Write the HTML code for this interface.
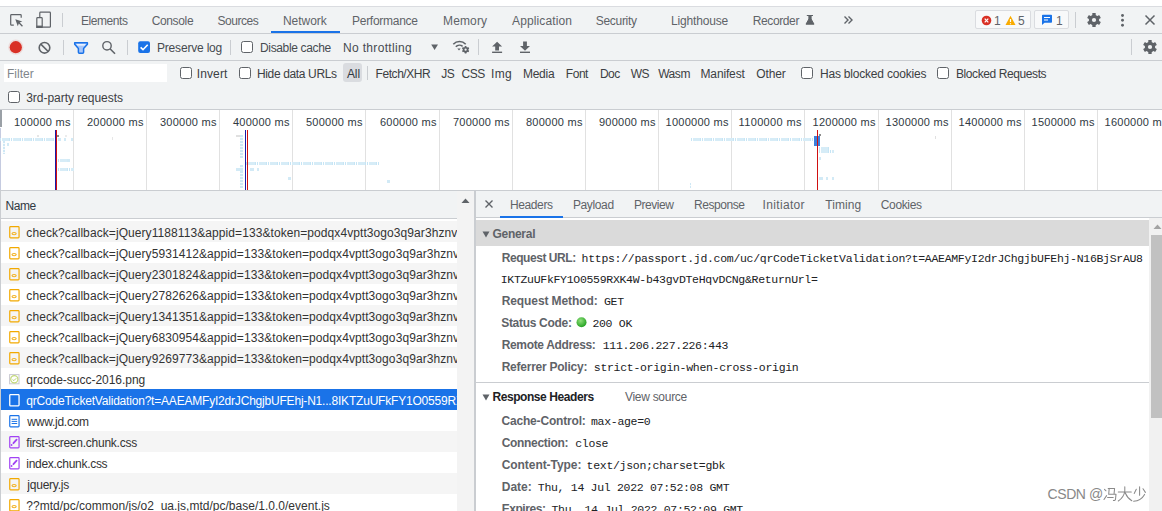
<!DOCTYPE html>
<html><head><meta charset="utf-8"><style>
html,body{margin:0;padding:0;width:1162px;height:511px;overflow:hidden;background:#fff;position:relative;font-family:'Liberation Sans', sans-serif;}
svg{display:block;}
</style></head><body>
<div style="position:absolute;left:0px;top:0px;width:1162px;height:6px;background:#fff;"></div><div style="position:absolute;left:0px;top:6px;width:1162px;height:1px;background:#dadce0;"></div><div style="position:absolute;left:0px;top:7px;width:1162px;height:26px;background:#f1f3f4;"></div><div style="position:absolute;left:0px;top:33px;width:1162px;height:1px;background:#cacdd1;"></div><div style="position:absolute;left:0px;top:34px;width:1162px;height:26px;background:#f1f3f4;"></div><div style="position:absolute;left:0px;top:60px;width:1162px;height:1px;background:#cacdd1;"></div><div style="position:absolute;left:0px;top:61px;width:1162px;height:48px;background:#f1f3f4;"></div><div style="position:absolute;left:0px;top:109px;width:1162px;height:1px;background:#cacdd1;"></div><div style="position:absolute;left:0px;top:110px;width:1162px;height:80px;background:#fff;"></div><div style="position:absolute;left:0px;top:190px;width:1162px;height:1px;background:#cacdd1;"></div><div style="position:absolute;left:271px;top:31px;width:69px;height:2px;background:#1a73e8;"></div><div style="position:absolute;left:62px;top:13px;width:1px;height:14px;background:#cacdd1;"></div><div style="position:absolute;left:1075px;top:12px;width:1px;height:16px;background:#cacdd1;"></div><div style="position:absolute;left:63px;top:40px;width:1px;height:15px;background:#cacdd1;"></div><div style="position:absolute;left:127px;top:40px;width:1px;height:15px;background:#cacdd1;"></div><div style="position:absolute;left:230px;top:40px;width:1px;height:15px;background:#cacdd1;"></div><div style="position:absolute;left:478px;top:39px;width:1px;height:16px;background:#cacdd1;"></div><div style="position:absolute;left:1131px;top:39px;width:1px;height:16px;background:#cacdd1;"></div><div style="position:absolute;left:4px;top:64px;width:163px;height:18px;background:#fff;"></div><div style="position:absolute;left:343px;top:63px;width:19px;height:19px;background:#dadce0;border-radius:3px;"></div><div style="position:absolute;left:367px;top:66px;width:1px;height:14px;background:#cacdd1;"></div><div style="position:absolute;left:73px;top:110px;width:1px;height:80px;background:#e1e1e1;"></div><div style="position:absolute;left:146px;top:110px;width:1px;height:80px;background:#e1e1e1;"></div><div style="position:absolute;left:219px;top:110px;width:1px;height:80px;background:#e1e1e1;"></div><div style="position:absolute;left:292px;top:110px;width:1px;height:80px;background:#e1e1e1;"></div><div style="position:absolute;left:365px;top:110px;width:1px;height:80px;background:#e1e1e1;"></div><div style="position:absolute;left:439px;top:110px;width:1px;height:80px;background:#e1e1e1;"></div><div style="position:absolute;left:512px;top:110px;width:1px;height:80px;background:#e1e1e1;"></div><div style="position:absolute;left:585px;top:110px;width:1px;height:80px;background:#e1e1e1;"></div><div style="position:absolute;left:658px;top:110px;width:1px;height:80px;background:#e1e1e1;"></div><div style="position:absolute;left:731px;top:110px;width:1px;height:80px;background:#e1e1e1;"></div><div style="position:absolute;left:804px;top:110px;width:1px;height:80px;background:#e1e1e1;"></div><div style="position:absolute;left:878px;top:110px;width:1px;height:80px;background:#e1e1e1;"></div><div style="position:absolute;left:951px;top:110px;width:1px;height:80px;background:#e1e1e1;"></div><div style="position:absolute;left:1024px;top:110px;width:1px;height:80px;background:#e1e1e1;"></div><div style="position:absolute;left:1097px;top:110px;width:1px;height:80px;background:#e1e1e1;"></div><div style="position:absolute;left:0px;top:110px;width:2px;height:17px;background:#9aa0a6;"></div><div style="position:absolute;left:0px;top:128px;width:1px;height:62px;background:#c5cbe0;"></div><div style="position:absolute;left:0px;top:138px;width:54px;height:3px;background:repeating-linear-gradient(90deg,#c6e5f5 0 1px,#fff 1px 2px,#d6ecf7 2px 9px,#c6e5f5 9px 10px,#fff 10px 11px);"></div><div style="position:absolute;left:58px;top:138px;width:3px;height:3px;background:#d2eaf6;"></div><div style="position:absolute;left:64px;top:138px;width:2px;height:3px;background:#d2eaf6;"></div><div style="position:absolute;left:71px;top:138px;width:2px;height:3px;background:#d2eaf6;"></div><div style="position:absolute;left:3px;top:141px;width:2px;height:13px;background:repeating-linear-gradient(180deg,#cfe8f5 0 2px,#f4fafd 2px 3px);"></div><div style="position:absolute;left:7px;top:143px;width:2px;height:3px;background:#d2eaf6;"></div><div style="position:absolute;left:58px;top:159px;width:13px;height:3px;background:repeating-linear-gradient(90deg,#c6e5f5 0 1px,#fff 1px 2px,#d6ecf7 2px 9px,#c6e5f5 9px 10px,#fff 10px 11px);"></div><div style="position:absolute;left:67px;top:159px;width:3px;height:3px;background:#d2eaf6;"></div><div style="position:absolute;left:58px;top:168px;width:16px;height:3px;background:repeating-linear-gradient(90deg,#c6e5f5 0 1px,#fff 1px 2px,#d6ecf7 2px 9px,#c6e5f5 9px 10px,#fff 10px 11px);"></div><div style="position:absolute;left:55px;top:130px;width:1px;height:60px;background:#1a1aa8;"></div><div style="position:absolute;left:56px;top:130px;width:1px;height:60px;background:#d01010;"></div><div style="position:absolute;left:240px;top:135px;width:3px;height:23px;background:repeating-linear-gradient(180deg,#cfe8f5 0 2px,#f4fafd 2px 3px);"></div><div style="position:absolute;left:240px;top:165px;width:3px;height:23px;background:repeating-linear-gradient(180deg,#cfe8f5 0 2px,#f4fafd 2px 3px);"></div><div style="position:absolute;left:246px;top:162px;width:133px;height:3px;background:repeating-linear-gradient(90deg,#c6e5f5 0 1px,#fff 1px 2px,#d6ecf7 2px 9px,#c6e5f5 9px 10px,#fff 10px 11px);"></div><div style="position:absolute;left:236px;top:168px;width:7px;height:3px;background:#d2eaf6;"></div><div style="position:absolute;left:250px;top:168px;width:4px;height:3px;background:#d2eaf6;"></div><div style="position:absolute;left:257px;top:168px;width:2px;height:3px;background:#d2eaf6;"></div><div style="position:absolute;left:288px;top:177px;width:3px;height:3px;background:#d2eaf6;"></div><div style="position:absolute;left:387px;top:180px;width:3px;height:3px;background:#d2eaf6;"></div><div style="position:absolute;left:245px;top:130px;width:1px;height:60px;background:#1a1aa8;"></div><div style="position:absolute;left:247px;top:130px;width:1px;height:60px;background:#d01010;"></div><div style="position:absolute;left:691px;top:138px;width:123px;height:3px;background:repeating-linear-gradient(90deg,#c6e5f5 0 1px,#fff 1px 2px,#d6ecf7 2px 9px,#c6e5f5 9px 10px,#fff 10px 11px);"></div><div style="position:absolute;left:814px;top:136px;width:6px;height:10px;background:#3c7fdc;"></div><div style="position:absolute;left:819px;top:147px;width:11px;height:3px;background:repeating-linear-gradient(90deg,#c6e5f5 0 1px,#fff 1px 2px,#d6ecf7 2px 9px,#c6e5f5 9px 10px,#fff 10px 11px);"></div><div style="position:absolute;left:819px;top:150px;width:15px;height:3px;background:repeating-linear-gradient(90deg,#c6e5f5 0 1px,#fff 1px 2px,#d6ecf7 2px 9px,#c6e5f5 9px 10px,#fff 10px 11px);"></div><div style="position:absolute;left:819px;top:157px;width:2px;height:3px;background:#d2eaf6;"></div><div style="position:absolute;left:819px;top:177px;width:4px;height:3px;background:#d2eaf6;"></div><div style="position:absolute;left:826px;top:177px;width:2px;height:3px;background:#d2eaf6;"></div><div style="position:absolute;left:832px;top:177px;width:2px;height:3px;background:#d2eaf6;"></div><div style="position:absolute;left:690px;top:183px;width:1px;height:5px;background:repeating-linear-gradient(180deg,#cfe8f5 0 2px,#f4fafd 2px 3px);"></div><div style="position:absolute;left:817px;top:130px;width:1px;height:60px;background:#d01010;"></div><div style="position:absolute;left:57px;top:135px;width:2px;height:2px;background:#8c8c8c;"></div><div style="position:absolute;left:37px;top:135px;width:2px;height:2px;background:#e6e6e6;"></div><div style="position:absolute;left:65px;top:135px;width:2px;height:2px;background:#ececec;"></div><div style="position:absolute;left:112px;top:137px;width:1px;height:3px;background:#e6e6e6;"></div><div style="position:absolute;left:236px;top:135px;width:4px;height:2px;background:#e0e0e0;"></div><div style="position:absolute;left:935px;top:136px;width:1px;height:3px;background:#e0e0e0;"></div><div style="position:absolute;left:819px;top:134px;width:2px;height:2px;background:#8c8c8c;"></div><div style="position:absolute;left:0px;top:191px;width:457px;height:27px;background:#f1f3f4;"></div><div style="position:absolute;left:0px;top:218px;width:457px;height:1px;background:#cacdd1;"></div><div style="position:absolute;left:0px;top:219px;width:457px;height:292px;background:#fff;"></div><div style="position:absolute;left:0px;top:191px;width:1px;height:320px;background:#cacdd1;"></div><div style="position:absolute;left:457px;top:191px;width:17px;height:320px;background:#f3f3f3;"></div><div style="position:absolute;left:474px;top:191px;width:2px;height:320px;background:#cacdd1;"></div><div style="position:absolute;left:1px;top:221px;width:456px;height:21px;background:#f5f5f5;"></div><div style="position:absolute;left:1px;top:263px;width:456px;height:21px;background:#f5f5f5;"></div><div style="position:absolute;left:1px;top:305px;width:456px;height:21px;background:#f5f5f5;"></div><div style="position:absolute;left:1px;top:347px;width:456px;height:21px;background:#f5f5f5;"></div><div style="position:absolute;left:1px;top:389px;width:456px;height:21px;background:#1a73e8;"></div><div style="position:absolute;left:1px;top:431px;width:456px;height:21px;background:#f5f5f5;"></div><div style="position:absolute;left:1px;top:473px;width:456px;height:21px;background:#f5f5f5;"></div><div style="position:absolute;left:476px;top:191px;width:686px;height:26px;background:#f1f3f4;"></div><div style="position:absolute;left:476px;top:217px;width:686px;height:1px;background:#cacdd1;"></div><div style="position:absolute;left:476px;top:218px;width:686px;height:293px;background:#fff;"></div><div style="position:absolute;left:500px;top:216px;width:63px;height:2px;background:#1a73e8;"></div><div style="position:absolute;left:476px;top:220px;width:673px;height:26px;background:#dadada;"></div><div style="position:absolute;left:1149px;top:218px;width:13px;height:293px;background:#f1f1f1;"></div><div style="position:absolute;left:1151px;top:235px;width:11px;height:183px;background:#c1c1c1;"></div><div style="position:absolute;left:476px;top:382px;width:673px;height:1px;background:#cacdd1;"></div><div style="position:absolute;left:975px;top:10px;width:56px;height:19px;background:#f8f9fa;border:1px solid #dadce0;border-radius:2px;box-sizing:border-box;"></div><div style="position:absolute;left:1034px;top:10px;width:35px;height:19px;background:#f8f9fa;border:1px solid #dadce0;border-radius:2px;box-sizing:border-box;"></div>
<svg style="position:absolute;left:9px;top:226px" width="11" height="13" viewBox="0 0 11 13"><rect x="0.75" y="0.6" width="9.3" height="11.3" rx="0.8" fill="none" stroke="#f2a900" stroke-width="1.2"/><ellipse cx="5.1" cy="7.6" rx="2.1" ry="1.1" fill="none" stroke="#f2b120" stroke-width="1.1"/></svg><svg style="position:absolute;left:9px;top:247px" width="11" height="13" viewBox="0 0 11 13"><rect x="0.75" y="0.6" width="9.3" height="11.3" rx="0.8" fill="none" stroke="#f2a900" stroke-width="1.2"/><ellipse cx="5.1" cy="7.6" rx="2.1" ry="1.1" fill="none" stroke="#f2b120" stroke-width="1.1"/></svg><svg style="position:absolute;left:9px;top:268px" width="11" height="13" viewBox="0 0 11 13"><rect x="0.75" y="0.6" width="9.3" height="11.3" rx="0.8" fill="none" stroke="#f2a900" stroke-width="1.2"/><ellipse cx="5.1" cy="7.6" rx="2.1" ry="1.1" fill="none" stroke="#f2b120" stroke-width="1.1"/></svg><svg style="position:absolute;left:9px;top:289px" width="11" height="13" viewBox="0 0 11 13"><rect x="0.75" y="0.6" width="9.3" height="11.3" rx="0.8" fill="none" stroke="#f2a900" stroke-width="1.2"/><ellipse cx="5.1" cy="7.6" rx="2.1" ry="1.1" fill="none" stroke="#f2b120" stroke-width="1.1"/></svg><svg style="position:absolute;left:9px;top:310px" width="11" height="13" viewBox="0 0 11 13"><rect x="0.75" y="0.6" width="9.3" height="11.3" rx="0.8" fill="none" stroke="#f2a900" stroke-width="1.2"/><ellipse cx="5.1" cy="7.6" rx="2.1" ry="1.1" fill="none" stroke="#f2b120" stroke-width="1.1"/></svg><svg style="position:absolute;left:9px;top:331px" width="11" height="13" viewBox="0 0 11 13"><rect x="0.75" y="0.6" width="9.3" height="11.3" rx="0.8" fill="none" stroke="#f2a900" stroke-width="1.2"/><ellipse cx="5.1" cy="7.6" rx="2.1" ry="1.1" fill="none" stroke="#f2b120" stroke-width="1.1"/></svg><svg style="position:absolute;left:9px;top:352px" width="11" height="13" viewBox="0 0 11 13"><rect x="0.75" y="0.6" width="9.3" height="11.3" rx="0.8" fill="none" stroke="#f2a900" stroke-width="1.2"/><ellipse cx="5.1" cy="7.6" rx="2.1" ry="1.1" fill="none" stroke="#f2b120" stroke-width="1.1"/></svg><svg style="position:absolute;left:9px;top:373px" width="11" height="13" viewBox="0 0 11 13"><rect x="0.6" y="1.6" width="9.4" height="9.2" fill="#fff" stroke="#c8c8d0" stroke-width="1"/><circle cx="5.3" cy="6.2" r="3.6" fill="none" stroke="#c3d97a" stroke-width="1.2"/><path d="M3.6 6.6L4.9 7.6L7.2 5.3" fill="none" stroke="#b5d36a" stroke-width="1"/></svg><svg style="position:absolute;left:9px;top:394px" width="11" height="13" viewBox="0 0 11 13"><rect x="0.75" y="0.6" width="9.3" height="11.3" rx="0.8" fill="none" stroke="#fff" stroke-width="1.3"/></svg><svg style="position:absolute;left:9px;top:415px" width="11" height="13" viewBox="0 0 11 13"><rect x="0.75" y="0.6" width="9.3" height="11.3" rx="0.8" fill="none" stroke="#1a73e8" stroke-width="1.2"/><path d="M2.6 4.3H8.2M2.6 6.4H8.2M2.6 8.5H8.2" stroke="#1a73e8" stroke-width="1"/></svg><svg style="position:absolute;left:9px;top:436px" width="11" height="13" viewBox="0 0 11 13"><rect x="0.75" y="0.6" width="9.3" height="11.3" rx="0.8" fill="none" stroke="#a142f4" stroke-width="1.2"/><path d="M4.4 7.2L7.6 3.6" stroke="#a142f4" stroke-width="1.8" stroke-linecap="round"/><circle cx="2.6" cy="9" r="0.9" fill="#a142f4"/></svg><svg style="position:absolute;left:9px;top:457px" width="11" height="13" viewBox="0 0 11 13"><rect x="0.75" y="0.6" width="9.3" height="11.3" rx="0.8" fill="none" stroke="#a142f4" stroke-width="1.2"/><path d="M4.4 7.2L7.6 3.6" stroke="#a142f4" stroke-width="1.8" stroke-linecap="round"/><circle cx="2.6" cy="9" r="0.9" fill="#a142f4"/></svg><svg style="position:absolute;left:9px;top:478px" width="11" height="13" viewBox="0 0 11 13"><rect x="0.75" y="0.6" width="9.3" height="11.3" rx="0.8" fill="none" stroke="#f2a900" stroke-width="1.2"/><ellipse cx="5.1" cy="7.6" rx="2.1" ry="1.1" fill="none" stroke="#f2b120" stroke-width="1.1"/></svg><svg style="position:absolute;left:9px;top:499px" width="11" height="13" viewBox="0 0 11 13"><rect x="0.75" y="0.6" width="9.3" height="11.3" rx="0.8" fill="none" stroke="#f2a900" stroke-width="1.2"/><ellipse cx="5.1" cy="7.6" rx="2.1" ry="1.1" fill="none" stroke="#f2b120" stroke-width="1.1"/></svg><svg style="position:absolute;left:843px;top:15px" width="11" height="10" viewBox="0 0 11 10"><path d="M1.5 1.5L5 5L1.5 8.5M5.5 1.5L9 5L5.5 8.5" fill="none" stroke="#5f6368" stroke-width="1.4"/></svg><svg style="position:absolute;left:981px;top:15px" width="11" height="11" viewBox="0 0 11 11"><circle cx="5.5" cy="5.5" r="4.8" fill="#d93025"/><path d="M3.7 3.7L7.3 7.3M7.3 3.7L3.7 7.3" stroke="#fff" stroke-width="1.2"/></svg><svg style="position:absolute;left:1005px;top:15px" width="11" height="11" viewBox="0 0 11 11"><path d="M5.5 0.8L10.5 10H0.5Z" fill="#f9ab00"/><path d="M5.5 4V7M5.5 8.2V9.2" stroke="#fff" stroke-width="1.2"/></svg><svg style="position:absolute;left:1041px;top:14px" width="12" height="12" viewBox="0 0 12 12"><path d="M1 1.5A0.8 0.8 0 0 1 1.8 0.8H10.2A0.8 0.8 0 0 1 11 1.5V8A0.8 0.8 0 0 1 10.2 8.8H3.5L1 11Z" fill="#1a73e8"/><path d="M3 3.5H9M3 6H7" stroke="#fff" stroke-width="1.2"/></svg><svg style="position:absolute;left:240px;top:40px" width="14" height="14" viewBox="0 0 14 14"><rect x="1.5" y="1.5" width="11" height="11" rx="2" fill="#fff" stroke="#5f6368" stroke-width="1"/></svg><svg style="position:absolute;left:179px;top:66px" width="14" height="14" viewBox="0 0 14 14"><rect x="1.5" y="1.5" width="11" height="11" rx="2" fill="#fff" stroke="#5f6368" stroke-width="1"/></svg><svg style="position:absolute;left:238px;top:66px" width="14" height="14" viewBox="0 0 14 14"><rect x="1.5" y="1.5" width="11" height="11" rx="2" fill="#fff" stroke="#5f6368" stroke-width="1"/></svg><svg style="position:absolute;left:800px;top:66px" width="14" height="14" viewBox="0 0 14 14"><rect x="1.5" y="1.5" width="11" height="11" rx="2" fill="#fff" stroke="#5f6368" stroke-width="1"/></svg><svg style="position:absolute;left:936px;top:66px" width="14" height="14" viewBox="0 0 14 14"><rect x="1.5" y="1.5" width="11" height="11" rx="2" fill="#fff" stroke="#5f6368" stroke-width="1"/></svg><svg style="position:absolute;left:7px;top:90px" width="14" height="14" viewBox="0 0 14 14"><rect x="1.5" y="1.5" width="11" height="11" rx="2" fill="#fff" stroke="#5f6368" stroke-width="1"/></svg><svg style="position:absolute;left:461px;top:198px" width="9" height="6" viewBox="0 0 9 6"><path d="M0.5 5H8.5L4.5 0.5Z" fill="#5f6368"/></svg><svg style="position:absolute;left:484px;top:199px" width="10" height="10" viewBox="0 0 10 10"><path d="M1.5 1.5L8.5 8.5M8.5 1.5L1.5 8.5" stroke="#5f6368" stroke-width="1.4"/></svg><svg style="position:absolute;left:482px;top:231px" width="8" height="7" viewBox="0 0 8 7"><path d="M0.5 0.5H7.5L4 6.5Z" fill="#5f6368"/></svg><svg style="position:absolute;left:482px;top:394px" width="8" height="7" viewBox="0 0 8 7"><path d="M0.5 0.5H7.5L4 6.5Z" fill="#5f6368"/></svg><svg style="position:absolute;left:576px;top:317px" width="12" height="12" viewBox="0 0 12 12"><defs><radialGradient id="g" cx="0.4" cy="0.35" r="0.7"><stop offset="0" stop-color="#8fe07a"/><stop offset="1" stop-color="#1e9e1e"/></radialGradient></defs><circle cx="5.5" cy="5.2" r="5" fill="url(#g)"/></svg><svg style="position:absolute;left:1153px;top:224px" width="9" height="6" viewBox="0 0 9 6"><path d="M0.5 5H8.5L4.5 0.5Z" fill="#a3a3a3"/></svg>
<svg style="position:absolute;left:0;top:0" width="1162" height="511"><path d="M13.8 25.2H11.5A0.8 0.8 0 0 1 10.7 24.4V15.5A0.8 0.8 0 0 1 11.5 14.7H20.4A0.8 0.8 0 0 1 21.2 15.5V17.8" fill="none" stroke="#5f6368" stroke-width="1.2"/><path d="M15.3 19.3L22.3 21.6L19.7 22.6L22.9 25.8L22 26.7L18.8 23.5L17.8 26.3Z" fill="#5f6368"/><path d="M39.8 17.5V13A0.8 0.8 0 0 1 40.6 12.2H49.6A0.8 0.8 0 0 1 50.4 13V26.4A0.8 0.8 0 0 1 49.6 27.2H42.5" fill="none" stroke="#5f6368" stroke-width="1.2"/><path d="M37.6 17.6H41.4A0.8 0.8 0 0 1 42.2 18.4V27.4H36.8V18.4A0.8 0.8 0 0 1 37.6 17.6Z" fill="none" stroke="#5f6368" stroke-width="1.2"/><rect x="36.4" y="25.6" width="6.2" height="2.2" fill="#5f6368"/><path d="M806.8 15.5H813M808.9 15.5V19L806 24.2H814L811.1 19V15.5" fill="#5f6368" stroke="#5f6368" stroke-width="1" stroke-linejoin="round"/><g transform="translate(1094 20)"><circle r="5.2" fill="#5f6368"/><rect x="-1.7" y="-7" width="3.4" height="14" rx="0.6" fill="#5f6368" transform="rotate(0)"/><rect x="-1.7" y="-7" width="3.4" height="14" rx="0.6" fill="#5f6368" transform="rotate(60)"/><rect x="-1.7" y="-7" width="3.4" height="14" rx="0.6" fill="#5f6368" transform="rotate(120)"/><circle r="2.1" fill="#f1f3f4"/></g><g transform="translate(1150 47)"><circle r="5.2" fill="#5f6368"/><rect x="-1.7" y="-7" width="3.4" height="14" rx="0.6" fill="#5f6368" transform="rotate(0)"/><rect x="-1.7" y="-7" width="3.4" height="14" rx="0.6" fill="#5f6368" transform="rotate(60)"/><rect x="-1.7" y="-7" width="3.4" height="14" rx="0.6" fill="#5f6368" transform="rotate(120)"/><circle r="2.1" fill="#f1f3f4"/></g><circle cx="1122.5" cy="15.5" r="1.45" fill="#5f6368"/><circle cx="1122.5" cy="20.3" r="1.45" fill="#5f6368"/><circle cx="1122.5" cy="25.2" r="1.45" fill="#5f6368"/><path d="M1145.5 15.5L1154.5 24.5M1154.5 15.5L1145.5 24.5" stroke="#5f6368" stroke-width="1.5"/><circle cx="15.8" cy="47.2" r="7.6" fill="#d93025" opacity="0.12"/><circle cx="15.8" cy="47.2" r="6.1" fill="#d93025"/><circle cx="44.5" cy="47.8" r="5.3" fill="none" stroke="#5f6368" stroke-width="1.6"/><path d="M40.8 44.1L48.2 51.5" stroke="#5f6368" stroke-width="1.6"/><path d="M74.7 42.7H87.4V44.3L83.6 48.5V52.3A1 1 0 0 1 82.6 53.3H79.4A1 1 0 0 1 78.4 52.3V48.5L74.7 44.3Z" fill="#a8c7fa" stroke="#1a73e8" stroke-width="1.5" stroke-linejoin="round"/><path d="M76.3 44.2H85.8L84.6 45.6H77.5Z" fill="#fff"/><circle cx="107" cy="45.8" r="4.2" fill="none" stroke="#5f6368" stroke-width="1.4"/><path d="M110 48.8L115 53.8" stroke="#5f6368" stroke-width="1.6"/><rect x="138.2" y="41.2" width="11.8" height="11.8" rx="2" fill="#1a73e8"/><path d="M140.6 47.4L143 49.7L147.7 44.7" fill="none" stroke="#fff" stroke-width="1.6"/><path d="M431.2 44.5H438L434.6 50Z" fill="#5f6368"/><path d="M453.3 44.2A8.5 8.5 0 0 1 465.7 44.2" fill="none" stroke="#5f6368" stroke-width="1.6"/><path d="M455.8 46.8A5 5 0 0 1 462.6 46.4" fill="none" stroke="#5f6368" stroke-width="1.6"/><path d="M457.3 48.6H460.7L459 50.5Z" fill="#5f6368"/><g transform="translate(465.6 49.7)"><circle r="2.8" fill="#5f6368"/><rect x="-0.9" y="-3.8" width="1.8" height="7.6" rx="0.6" fill="#5f6368" transform="rotate(0)"/><rect x="-0.9" y="-3.8" width="1.8" height="7.6" rx="0.6" fill="#5f6368" transform="rotate(60)"/><rect x="-0.9" y="-3.8" width="1.8" height="7.6" rx="0.6" fill="#5f6368" transform="rotate(120)"/><circle r="1.1" fill="#f1f3f4"/></g><path d="M497.1 41.7L502.1 46.6H499V50.6H495.2V46.6H492.1Z" fill="#5f6368"/><rect x="492.1" y="51.6" width="10" height="1.4" fill="#5f6368"/><path d="M523.1 41.4H526.9V46H530L525 50.8L520 46H523.1Z" fill="#5f6368"/><rect x="520" y="51.6" width="10" height="1.4" fill="#5f6368"/><g fill="none" stroke="#fff" stroke-width="2.6" stroke-linecap="round" opacity="0.9"><path d="M1104.5 489.3L1106 490.8 M1104 499.5L1106.6 495.6 M1108.2 488.4H1114.6L1114.1 493.4 M1109.2 488.4L1108.7 494.2H1116L1115.5 499.3Q1115.2 500.8 1113.4 500.4 M1107.6 497.4H1113.2 M1118.3 492H1131.3 M1124.8 486.8V491Q1124 497.2 1118.3 501 M1125.3 493Q1127.5 498.3 1131.8 500.8 M1139.6 486.8V495.3 M1136.3 489.3L1134.2 493.4 M1143 488.8L1145.4 492.4 M1144.6 494.4Q1141 500.6 1133.6 501.3"/></g><g fill="none" stroke="#8a8a8a" stroke-width="1.05" stroke-linecap="round" stroke-linejoin="round"><path d="M1104.5 489.3L1106 490.8 M1104 499.5L1106.6 495.6 M1108.2 488.4H1114.6L1114.1 493.4 M1109.2 488.4L1108.7 494.2H1116L1115.5 499.3Q1115.2 500.8 1113.4 500.4 M1107.6 497.4H1113.2 M1118.3 492H1131.3 M1124.8 486.8V491Q1124 497.2 1118.3 501 M1125.3 493Q1127.5 498.3 1131.8 500.8 M1139.6 486.8V495.3 M1136.3 489.3L1134.2 493.4 M1143 488.8L1145.4 492.4 M1144.6 494.4Q1141 500.6 1133.6 501.3"/></g></svg>
<div style="position:absolute;top:14px;font:normal 12px 'Liberation Sans', sans-serif;line-height:14px;white-space:pre;color:#5f6368;letter-spacing:-0.432px;left:81.00px;">Elements</div><div style="position:absolute;top:14px;font:normal 12px 'Liberation Sans', sans-serif;line-height:14px;white-space:pre;color:#5f6368;letter-spacing:-0.359px;left:151.70px;">Console</div><div style="position:absolute;top:14px;font:normal 12px 'Liberation Sans', sans-serif;line-height:14px;white-space:pre;color:#5f6368;letter-spacing:-0.450px;left:217.50px;">Sources</div><div style="position:absolute;top:14px;font:normal 12px 'Liberation Sans', sans-serif;line-height:14px;white-space:pre;color:#5f6368;letter-spacing:-0.052px;left:283.00px;">Network</div><div style="position:absolute;top:14px;font:normal 12px 'Liberation Sans', sans-serif;line-height:14px;white-space:pre;color:#5f6368;letter-spacing:-0.272px;left:352.00px;">Performance</div><div style="position:absolute;top:14px;font:normal 12px 'Liberation Sans', sans-serif;line-height:14px;white-space:pre;color:#5f6368;letter-spacing:0.113px;left:443.10px;">Memory</div><div style="position:absolute;top:14px;font:normal 12px 'Liberation Sans', sans-serif;line-height:14px;white-space:pre;color:#5f6368;letter-spacing:0.127px;left:512.00px;">Application</div><div style="position:absolute;top:14px;font:normal 12px 'Liberation Sans', sans-serif;line-height:14px;white-space:pre;color:#5f6368;letter-spacing:-0.307px;left:595.80px;">Security</div><div style="position:absolute;top:14px;font:normal 12px 'Liberation Sans', sans-serif;line-height:14px;white-space:pre;color:#5f6368;letter-spacing:-0.171px;left:671.00px;">Lighthouse</div><div style="position:absolute;top:14px;font:normal 12px 'Liberation Sans', sans-serif;line-height:14px;white-space:pre;color:#5f6368;letter-spacing:-0.394px;left:752.80px;">Recorder</div><div style="position:absolute;top:41px;font:normal 12px 'Liberation Sans', sans-serif;line-height:14px;white-space:pre;color:#474b50;letter-spacing:-0.190px;left:157.00px;">Preserve log</div><div style="position:absolute;top:41px;font:normal 12px 'Liberation Sans', sans-serif;line-height:14px;white-space:pre;color:#474b50;letter-spacing:-0.350px;left:260.00px;">Disable cache</div><div style="position:absolute;top:41px;font:normal 12px 'Liberation Sans', sans-serif;line-height:14px;white-space:pre;color:#474b50;letter-spacing:0.331px;left:343.00px;">No throttling</div><div style="position:absolute;top:67px;font:normal 12px 'Liberation Sans', sans-serif;line-height:14px;white-space:pre;color:#80868b;letter-spacing:0.000px;left:7.00px;">Filter</div><div style="position:absolute;top:67px;font:normal 12px 'Liberation Sans', sans-serif;line-height:14px;white-space:pre;color:#3c4043;letter-spacing:0.104px;left:196.80px;">Invert</div><div style="position:absolute;top:67px;font:normal 12px 'Liberation Sans', sans-serif;line-height:14px;white-space:pre;color:#3c4043;letter-spacing:-0.362px;left:257.00px;">Hide data URLs</div><div style="position:absolute;top:67px;font:normal 12px 'Liberation Sans', sans-serif;line-height:14px;white-space:pre;color:#303942;letter-spacing:-0.135px;left:347.00px;">All</div><div style="position:absolute;top:67px;font:normal 12px 'Liberation Sans', sans-serif;line-height:14px;white-space:pre;color:#3c4043;letter-spacing:-0.450px;left:375.60px;">Fetch/XHR</div><div style="position:absolute;top:67px;font:normal 12px 'Liberation Sans', sans-serif;line-height:14px;white-space:pre;color:#3c4043;letter-spacing:-0.450px;left:441.30px;">JS</div><div style="position:absolute;top:67px;font:normal 12px 'Liberation Sans', sans-serif;line-height:14px;white-space:pre;color:#3c4043;letter-spacing:-0.450px;left:461.50px;">CSS</div><div style="position:absolute;top:67px;font:normal 12px 'Liberation Sans', sans-serif;line-height:14px;white-space:pre;color:#3c4043;letter-spacing:0.450px;left:490.90px;">Img</div><div style="position:absolute;top:67px;font:normal 12px 'Liberation Sans', sans-serif;line-height:14px;white-space:pre;color:#3c4043;letter-spacing:-0.252px;left:522.90px;">Media</div><div style="position:absolute;top:67px;font:normal 12px 'Liberation Sans', sans-serif;line-height:14px;white-space:pre;color:#3c4043;letter-spacing:-0.450px;left:565.80px;">Font</div><div style="position:absolute;top:67px;font:normal 12px 'Liberation Sans', sans-serif;line-height:14px;white-space:pre;color:#3c4043;letter-spacing:-0.450px;left:599.90px;">Doc</div><div style="position:absolute;top:67px;font:normal 12px 'Liberation Sans', sans-serif;line-height:14px;white-space:pre;color:#3c4043;letter-spacing:-0.450px;left:630.70px;">WS</div><div style="position:absolute;top:67px;font:normal 12px 'Liberation Sans', sans-serif;line-height:14px;white-space:pre;color:#3c4043;letter-spacing:-0.450px;left:658.20px;">Wasm</div><div style="position:absolute;top:67px;font:normal 12px 'Liberation Sans', sans-serif;line-height:14px;white-space:pre;color:#3c4043;letter-spacing:-0.145px;left:700.50px;">Manifest</div><div style="position:absolute;top:67px;font:normal 12px 'Liberation Sans', sans-serif;line-height:14px;white-space:pre;color:#3c4043;letter-spacing:-0.129px;left:756.30px;">Other</div><div style="position:absolute;top:67px;font:normal 12px 'Liberation Sans', sans-serif;line-height:14px;white-space:pre;color:#3c4043;letter-spacing:-0.203px;left:820.00px;">Has blocked cookies</div><div style="position:absolute;top:67px;font:normal 12px 'Liberation Sans', sans-serif;line-height:14px;white-space:pre;color:#3c4043;letter-spacing:-0.408px;left:956.00px;">Blocked Requests</div><div style="position:absolute;top:91px;font:normal 12px 'Liberation Sans', sans-serif;line-height:14px;white-space:pre;color:#3c4043;letter-spacing:-0.034px;left:26.20px;">3rd-party requests</div><div style="position:absolute;top:115px;font:normal 11px 'Liberation Sans', sans-serif;line-height:14px;white-space:pre;color:#303942;letter-spacing:0.259px;left:13.90px;">100000 ms</div><div style="position:absolute;top:115px;font:normal 11px 'Liberation Sans', sans-serif;line-height:14px;white-space:pre;color:#303942;letter-spacing:0.259px;left:86.90px;">200000 ms</div><div style="position:absolute;top:115px;font:normal 11px 'Liberation Sans', sans-serif;line-height:14px;white-space:pre;color:#303942;letter-spacing:0.259px;left:159.90px;">300000 ms</div><div style="position:absolute;top:115px;font:normal 11px 'Liberation Sans', sans-serif;line-height:14px;white-space:pre;color:#303942;letter-spacing:0.259px;left:232.90px;">400000 ms</div><div style="position:absolute;top:115px;font:normal 11px 'Liberation Sans', sans-serif;line-height:14px;white-space:pre;color:#303942;letter-spacing:0.259px;left:305.90px;">500000 ms</div><div style="position:absolute;top:115px;font:normal 11px 'Liberation Sans', sans-serif;line-height:14px;white-space:pre;color:#303942;letter-spacing:0.259px;left:379.90px;">600000 ms</div><div style="position:absolute;top:115px;font:normal 11px 'Liberation Sans', sans-serif;line-height:14px;white-space:pre;color:#303942;letter-spacing:0.259px;left:452.90px;">700000 ms</div><div style="position:absolute;top:115px;font:normal 11px 'Liberation Sans', sans-serif;line-height:14px;white-space:pre;color:#303942;letter-spacing:0.259px;left:525.90px;">800000 ms</div><div style="position:absolute;top:115px;font:normal 11px 'Liberation Sans', sans-serif;line-height:14px;white-space:pre;color:#303942;letter-spacing:0.259px;left:598.90px;">900000 ms</div><div style="position:absolute;top:115px;font:normal 11px 'Liberation Sans', sans-serif;line-height:14px;white-space:pre;color:#303942;letter-spacing:0.251px;left:665.60px;">1000000 ms</div><div style="position:absolute;top:115px;font:normal 11px 'Liberation Sans', sans-serif;line-height:14px;white-space:pre;color:#303942;letter-spacing:0.341px;left:738.60px;">1100000 ms</div><div style="position:absolute;top:115px;font:normal 11px 'Liberation Sans', sans-serif;line-height:14px;white-space:pre;color:#303942;letter-spacing:0.251px;left:812.60px;">1200000 ms</div><div style="position:absolute;top:115px;font:normal 11px 'Liberation Sans', sans-serif;line-height:14px;white-space:pre;color:#303942;letter-spacing:0.251px;left:885.60px;">1300000 ms</div><div style="position:absolute;top:115px;font:normal 11px 'Liberation Sans', sans-serif;line-height:14px;white-space:pre;color:#303942;letter-spacing:0.251px;left:958.60px;">1400000 ms</div><div style="position:absolute;top:115px;font:normal 11px 'Liberation Sans', sans-serif;line-height:14px;white-space:pre;color:#303942;letter-spacing:0.251px;left:1031.60px;">1500000 ms</div><div style="position:absolute;top:115px;font:normal 11px 'Liberation Sans', sans-serif;line-height:14px;white-space:pre;color:#303942;letter-spacing:0.251px;left:1104.60px;">1600000 ms</div><div style="position:absolute;top:199px;font:normal 12px 'Liberation Sans', sans-serif;line-height:14px;white-space:pre;color:#303942;letter-spacing:-0.450px;left:5.50px;">Name</div><div style="position:absolute;top:226px;font:normal 12px 'Liberation Sans', sans-serif;line-height:14px;white-space:pre;color:#333;letter-spacing:0.080px;left:26.30px;width:430.70px;overflow:hidden;">check?callback=jQuery1188113&amp;appid=133&amp;token=podqx4vptt3ogo3q9ar3hznvw</div><div style="position:absolute;top:247px;font:normal 12px 'Liberation Sans', sans-serif;line-height:14px;white-space:pre;color:#333;letter-spacing:0.080px;left:26.30px;width:430.70px;overflow:hidden;">check?callback=jQuery5931412&amp;appid=133&amp;token=podqx4vptt3ogo3q9ar3hznvw</div><div style="position:absolute;top:268px;font:normal 12px 'Liberation Sans', sans-serif;line-height:14px;white-space:pre;color:#333;letter-spacing:0.080px;left:26.30px;width:430.70px;overflow:hidden;">check?callback=jQuery2301824&amp;appid=133&amp;token=podqx4vptt3ogo3q9ar3hznvw</div><div style="position:absolute;top:289px;font:normal 12px 'Liberation Sans', sans-serif;line-height:14px;white-space:pre;color:#333;letter-spacing:0.080px;left:26.30px;width:430.70px;overflow:hidden;">check?callback=jQuery2782626&amp;appid=133&amp;token=podqx4vptt3ogo3q9ar3hznvw</div><div style="position:absolute;top:310px;font:normal 12px 'Liberation Sans', sans-serif;line-height:14px;white-space:pre;color:#333;letter-spacing:0.080px;left:26.30px;width:430.70px;overflow:hidden;">check?callback=jQuery1341351&amp;appid=133&amp;token=podqx4vptt3ogo3q9ar3hznvw</div><div style="position:absolute;top:331px;font:normal 12px 'Liberation Sans', sans-serif;line-height:14px;white-space:pre;color:#333;letter-spacing:0.080px;left:26.30px;width:430.70px;overflow:hidden;">check?callback=jQuery6830954&amp;appid=133&amp;token=podqx4vptt3ogo3q9ar3hznvw</div><div style="position:absolute;top:352px;font:normal 12px 'Liberation Sans', sans-serif;line-height:14px;white-space:pre;color:#333;letter-spacing:0.080px;left:26.30px;width:430.70px;overflow:hidden;">check?callback=jQuery9269773&amp;appid=133&amp;token=podqx4vptt3ogo3q9ar3hznvw</div><div style="position:absolute;top:373px;font:normal 12px 'Liberation Sans', sans-serif;line-height:14px;white-space:pre;color:#333;letter-spacing:-0.023px;left:26.30px;width:430.70px;overflow:hidden;">qrcode-succ-2016.png</div><div style="position:absolute;top:394px;font:normal 12px 'Liberation Sans', sans-serif;line-height:14px;white-space:pre;color:#fff;letter-spacing:-0.200px;left:26.30px;width:430.70px;overflow:hidden;">qrCodeTicketValidation?t=AAEAMFyI2drJChgjbUFEhj-N1...8IKTZuUFkFY1O0559RXK4W</div><div style="position:absolute;top:415px;font:normal 12px 'Liberation Sans', sans-serif;line-height:14px;white-space:pre;color:#333;letter-spacing:-0.246px;left:27.30px;width:429.70px;overflow:hidden;">www.jd.com</div><div style="position:absolute;top:436px;font:normal 12px 'Liberation Sans', sans-serif;line-height:14px;white-space:pre;color:#333;letter-spacing:-0.244px;left:26.30px;width:430.70px;overflow:hidden;">first-screen.chunk.css</div><div style="position:absolute;top:457px;font:normal 12px 'Liberation Sans', sans-serif;line-height:14px;white-space:pre;color:#333;letter-spacing:-0.291px;left:26.30px;width:430.70px;overflow:hidden;">index.chunk.css</div><div style="position:absolute;top:478px;font:normal 12px 'Liberation Sans', sans-serif;line-height:14px;white-space:pre;color:#333;letter-spacing:-0.224px;left:27.30px;width:429.70px;overflow:hidden;">jquery.js</div><div style="position:absolute;top:499px;font:normal 12px 'Liberation Sans', sans-serif;line-height:14px;white-space:pre;color:#333;letter-spacing:0.013px;left:26.30px;width:430.70px;overflow:hidden;">??mtd/pc/common/js/o2_ua.js,mtd/pc/base/1.0.0/event.js</div><div style="position:absolute;top:198px;font:normal 12px 'Liberation Sans', sans-serif;line-height:14px;white-space:pre;color:#5f6368;letter-spacing:-0.393px;left:510.00px;">Headers</div><div style="position:absolute;top:198px;font:normal 12px 'Liberation Sans', sans-serif;line-height:14px;white-space:pre;color:#5f6368;letter-spacing:-0.365px;left:572.90px;">Payload</div><div style="position:absolute;top:198px;font:normal 12px 'Liberation Sans', sans-serif;line-height:14px;white-space:pre;color:#5f6368;letter-spacing:-0.450px;left:634.00px;">Preview</div><div style="position:absolute;top:198px;font:normal 12px 'Liberation Sans', sans-serif;line-height:14px;white-space:pre;color:#5f6368;letter-spacing:-0.450px;left:694.00px;">Response</div><div style="position:absolute;top:198px;font:normal 12px 'Liberation Sans', sans-serif;line-height:14px;white-space:pre;color:#5f6368;letter-spacing:0.331px;left:762.60px;">Initiator</div><div style="position:absolute;top:198px;font:normal 12px 'Liberation Sans', sans-serif;line-height:14px;white-space:pre;color:#5f6368;letter-spacing:0.083px;left:825.20px;">Timing</div><div style="position:absolute;top:198px;font:normal 12px 'Liberation Sans', sans-serif;line-height:14px;white-space:pre;color:#5f6368;letter-spacing:-0.359px;left:880.80px;">Cookies</div><div style="position:absolute;top:227px;font:bold 12px 'Liberation Sans', sans-serif;line-height:14px;white-space:pre;color:#5f6368;letter-spacing:-0.259px;left:492.40px;">General</div><div style="position:absolute;top:251px;font:bold 12px 'Liberation Sans', sans-serif;line-height:14px;white-space:pre;color:#5f6368;letter-spacing:-0.440px;left:501.70px;">Request URL:</div><div style="position:absolute;top:252px;font:normal 11.5px 'Liberation Mono', monospace;line-height:14px;white-space:pre;color:#202124;letter-spacing:-0.300px;left:581.60px;">https://passport.jd.com/uc/qrCodeTicketValidation?t=AAEAMFyI2drJChgjbUFEhj-N16BjSrAU8</div><div style="position:absolute;top:273px;font:normal 11.5px 'Liberation Mono', monospace;line-height:14px;white-space:pre;color:#202124;letter-spacing:-0.300px;left:500.70px;">IKTZuUFkFY1O0559RXK4W-b43gvDTeHqvDCNg&amp;ReturnUrl=</div><div style="position:absolute;top:294px;font:bold 12px 'Liberation Sans', sans-serif;line-height:14px;white-space:pre;color:#5f6368;letter-spacing:-0.095px;left:501.70px;">Request Method:</div><div style="position:absolute;top:295px;font:normal 11.5px 'Liberation Mono', monospace;line-height:14px;white-space:pre;color:#202124;letter-spacing:-0.300px;left:604.00px;">GET</div><div style="position:absolute;top:316px;font:bold 12px 'Liberation Sans', sans-serif;line-height:14px;white-space:pre;color:#5f6368;letter-spacing:-0.301px;left:501.20px;">Status Code:</div><div style="position:absolute;top:317px;font:normal 11.5px 'Liberation Mono', monospace;line-height:14px;white-space:pre;color:#202124;letter-spacing:-0.300px;left:592.40px;">200 OK</div><div style="position:absolute;top:338px;font:bold 12px 'Liberation Sans', sans-serif;line-height:14px;white-space:pre;color:#5f6368;letter-spacing:-0.340px;left:501.70px;">Remote Address:</div><div style="position:absolute;top:339px;font:normal 11.5px 'Liberation Mono', monospace;line-height:14px;white-space:pre;color:#202124;letter-spacing:-0.300px;left:602.70px;">111.206.227.226:443</div><div style="position:absolute;top:360px;font:bold 12px 'Liberation Sans', sans-serif;line-height:14px;white-space:pre;color:#5f6368;letter-spacing:-0.245px;left:501.70px;">Referrer Policy:</div><div style="position:absolute;top:361px;font:normal 11.5px 'Liberation Mono', monospace;line-height:14px;white-space:pre;color:#202124;letter-spacing:-0.300px;left:593.80px;">strict-origin-when-cross-origin</div><div style="position:absolute;top:390px;font:bold 12px 'Liberation Sans', sans-serif;line-height:14px;white-space:pre;color:#202124;letter-spacing:-0.425px;left:492.40px;">Response Headers</div><div style="position:absolute;top:390px;font:normal 12px 'Liberation Sans', sans-serif;line-height:14px;white-space:pre;color:#5f6368;letter-spacing:-0.277px;left:624.90px;">View source</div><div style="position:absolute;top:414px;font:bold 12px 'Liberation Sans', sans-serif;line-height:14px;white-space:pre;color:#5f6368;letter-spacing:-0.182px;left:501.50px;">Cache-Control:</div><div style="position:absolute;top:415px;font:normal 11.5px 'Liberation Mono', monospace;line-height:14px;white-space:pre;color:#202124;letter-spacing:-0.300px;left:591.00px;">max-age=0</div><div style="position:absolute;top:436px;font:bold 12px 'Liberation Sans', sans-serif;line-height:14px;white-space:pre;color:#5f6368;letter-spacing:-0.319px;left:501.70px;">Connection:</div><div style="position:absolute;top:437px;font:normal 11.5px 'Liberation Mono', monospace;line-height:14px;white-space:pre;color:#202124;letter-spacing:-0.300px;left:575.20px;">close</div><div style="position:absolute;top:458px;font:bold 12px 'Liberation Sans', sans-serif;line-height:14px;white-space:pre;color:#5f6368;letter-spacing:-0.061px;left:501.70px;">Content-Type:</div><div style="position:absolute;top:459px;font:normal 11.5px 'Liberation Mono', monospace;line-height:14px;white-space:pre;color:#202124;letter-spacing:-0.300px;left:586.60px;">text/json;charset=gbk</div><div style="position:absolute;top:480px;font:bold 12px 'Liberation Sans', sans-serif;line-height:14px;white-space:pre;color:#5f6368;letter-spacing:0.023px;left:501.70px;">Date:</div><div style="position:absolute;top:481px;font:normal 11.5px 'Liberation Mono', monospace;line-height:14px;white-space:pre;color:#202124;letter-spacing:-0.300px;left:537.80px;">Thu, 14 Jul 2022 07:52:08 GMT</div><div style="position:absolute;top:502px;font:bold 12px 'Liberation Sans', sans-serif;line-height:14px;white-space:pre;color:#5f6368;letter-spacing:-0.450px;left:501.70px;">Expires:</div><div style="position:absolute;top:503px;font:normal 11.5px 'Liberation Mono', monospace;line-height:14px;white-space:pre;color:#202124;letter-spacing:-0.300px;left:551.50px;">Thu, 14 Jul 2022 07:52:09 GMT</div><div style="position:absolute;top:14px;font:normal 12px 'Liberation Sans', sans-serif;line-height:14px;white-space:pre;color:#5f6368;letter-spacing:0.000px;left:994.00px;">1</div><div style="position:absolute;top:14px;font:normal 12px 'Liberation Sans', sans-serif;line-height:14px;white-space:pre;color:#5f6368;letter-spacing:0.000px;left:1018.00px;">5</div><div style="position:absolute;top:14px;font:normal 12px 'Liberation Sans', sans-serif;line-height:14px;white-space:pre;color:#5f6368;letter-spacing:0.000px;left:1056.00px;">1</div><div style="position:absolute;top:486.5px;font:normal 14px 'Liberation Sans', sans-serif;line-height:14px;white-space:pre;color:#888;letter-spacing:-0.450px;text-shadow:0 0 1px #fff,0 0 1px #fff;left:1047.60px;">CSDN</div><div style="position:absolute;top:486.5px;font:normal 14px 'Liberation Sans', sans-serif;line-height:14px;white-space:pre;color:#888;letter-spacing:0.000px;text-shadow:0 0 1px #fff,0 0 1px #fff;left:1089.00px;">@</div>
</body></html>
